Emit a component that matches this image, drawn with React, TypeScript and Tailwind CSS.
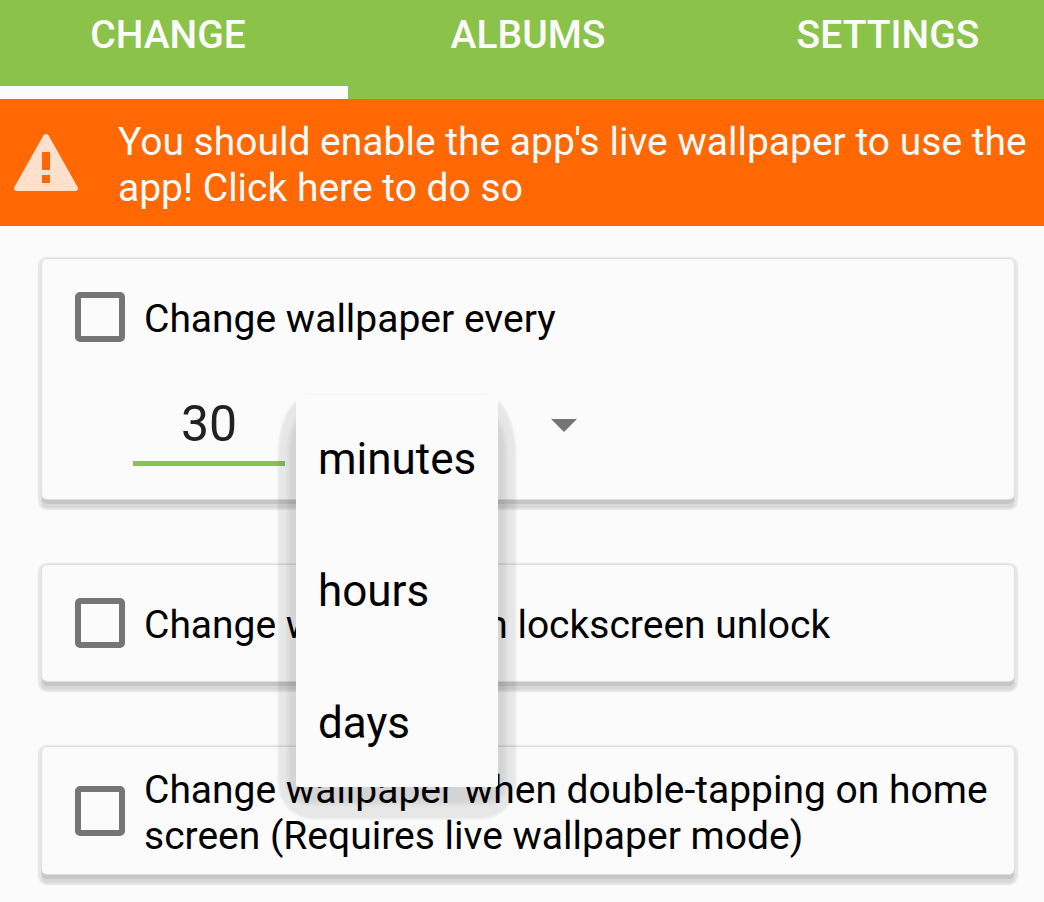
import { useState } from "react";
import type { ReactNode } from "react";

const TABS = ["CHANGE", "ALBUMS", "SETTINGS"];
const UNITS = ["minutes", "hours", "days"];

function Tabs() {
  const [active, setActive] = useState("CHANGE");
  return (
    <nav className="overflow-hidden bg-[#8bc34a]">
      <div className="-mr-6 -ml-3 grid grid-cols-3">
        {TABS.map((tab) => (
          <button
            key={tab}
            type="button"
            aria-current={active === tab ? "page" : undefined}
            onClick={() => setActive(tab)}
            className={
              "border-b-[13px] pt-[11px] pb-[27px] text-[39px] leading-[48px] font-medium text-[#fbfbfb] " +
              (active === tab ? "border-[#fbfbfb]" : "border-transparent")
            }
          >
            {tab}
          </button>
        ))}
      </div>
    </nav>
  );
}

function WarningIcon() {
  return (
    <svg width="64" height="57" viewBox="0 0 64 57" aria-hidden="true" className="shrink-0">
      <path
        fill="#ffe0cd"
        fillRule="evenodd"
        d="M29.5 1.2Q32 -1 34.5 1.2L63.6 53Q65 57 61 57H3Q-1 57 .4 53ZM28 18V36H36V18ZM28 41V49H36V41Z"
      />
    </svg>
  );
}

function Card({ children }: { children: ReactNode }) {
  return (
    <section className="rounded-[5px] bg-[#fbfbfb] shadow-[0_0_0_1px_#dedede,0_5px_0_0_#c6c6c6,0_8px_1px_1px_#d8d8d8,0_7px_1px_4px_#e7e7e7,0_2px_1px_4px_#e7e7e7]">
      {children}
    </section>
  );
}

function Option({ id, children }: { id: string; children: ReactNode }) {
  return (
    <div className="flex items-center gap-[19px] pr-3 pl-[33px]">
      <input
        id={id}
        type="checkbox"
        className="size-[50px] shrink-0 appearance-none rounded-[5px] border-[6px] border-[#757575] checked:bg-[#8bc34a]"
      />
      <label htmlFor={id} className="pt-1 text-[39px] leading-[46px] text-black">
        {children}
      </label>
    </div>
  );
}

function UnitMenu({ onPick }: { onPick: (unit: string) => void }) {
  return (
    <div className="absolute top-1 left-[11px] z-10 w-[202px]">
      <div className="absolute inset-x-[-18px] top-0 bottom-[-32px] rounded-t-[32px_60px] rounded-b-[36px] bg-black/8 blur-[1px]" />
      <div className="absolute inset-x-[-8px] top-5 bottom-[-17px] rounded-t-[16px_40px] rounded-b-[20px] bg-black/8 blur-[2px]" />
      <div
        role="listbox"
        aria-label="Interval unit"
        className="relative flex flex-col gap-20 rounded-[3px] bg-[#fbfbfb] py-[38px] pl-[22px]"
      >
        {UNITS.map((unit) => (
          <button
            key={unit}
            type="button"
            role="option"
            aria-selected={unit === "minutes"}
            onClick={() => onPick(unit)}
            className="text-left text-[44px] leading-[52px] text-black"
          >
            {unit}
          </button>
        ))}
      </div>
    </div>
  );
}

function IntervalRow() {
  const [open, setOpen] = useState(true);
  const [unit, setUnit] = useState("minutes");
  return (
    <div className="flex h-[75px] pl-[91px]">
      <input
        type="text"
        inputMode="numeric"
        aria-label="Interval"
        defaultValue="30"
        className="w-[152px] border-b-[5px] border-[#8bc34a] bg-transparent pb-1 text-center text-[50px] leading-[60px] text-[#212121] outline-none"
      />
      <div className="relative">
        <button
          type="button"
          aria-label="Choose unit"
          aria-haspopup="listbox"
          aria-expanded={open}
          onClick={() => setOpen(!open)}
          className="flex h-[68px] w-[292px] items-center justify-between pl-[33px] text-[44px]"
        >
          <span>{open ? "" : unit}</span>
          <svg width="26" height="13" viewBox="0 0 26 13" aria-hidden="true">
            <path d="M0 0H26L13 13Z" fill="#757575" />
          </svg>
        </button>
        {open && (
          <UnitMenu
            onPick={(picked) => {
              setUnit(picked);
              setOpen(false);
            }}
          />
        )}
      </div>
    </div>
  );
}

export default function App() {
  return (
    <div className="min-h-screen bg-[#fbfbfb] font-[Roboto,sans-serif]">
      <Tabs />
      <button
        type="button"
        className="flex w-full items-center gap-10 bg-[#ff6803] py-[15px] pr-2 pl-3.5 text-left text-[39px] leading-[46px] text-[#fbfbfb]"
      >
        <WarningIcon />
        <span className="pt-[5px]">
          You should enable the app's live wallpaper to use the app! Click here to do so
        </span>
      </button>
      <main className="flex flex-col gap-[66px] pt-[33px] pr-[30px] pb-7 pl-[42px]">
        <Card>
          <div className="flex flex-col gap-[49px] py-[33px]">
            <Option id="every">Change wallpaper every</Option>
            <IntervalRow />
          </div>
        </Card>
        <Card>
          <div className="py-[33px]">
            <Option id="unlock">Change wallpaper on lockscreen unlock</Option>
          </div>
        </Card>
        <Card>
          <div className="pt-4 pb-[15px]">
            <Option id="double-tap">
              Change wallpaper when double-tapping on home screen (Requires live wallpaper mode)
            </Option>
          </div>
        </Card>
      </main>
    </div>
  );
}
